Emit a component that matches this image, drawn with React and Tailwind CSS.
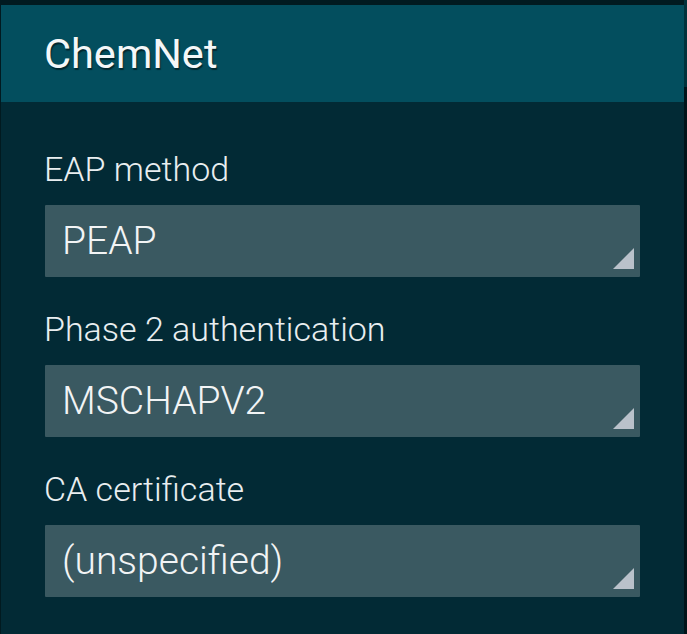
import React from "react";

function Field({ label, value }) {
  return (
    <div className="flex flex-col">
      <div className="h-[40px] leading-[40px] text-[34px] -ml-[1px] text-[#e9eef0] font-light whitespace-nowrap">
        {label}
      </div>
      <div className="relative mt-[16px] h-[72px] w-[595px] bg-[#3a5961] rounded-[1px] flex items-center pl-[17px]">
        <span className="text-[39px] leading-[72px] text-[#f2f4f5] font-light whitespace-nowrap">
          {value}
        </span>
        <svg
          className="absolute right-[6px] bottom-[8px]"
          width="21"
          height="21"
          viewBox="0 0 21 21"
        >
          <polygon points="21,0 21,21 0,21" fill="#b9c1ca" />
        </svg>
      </div>
    </div>
  );
}

export default function App() {
  return (
    <div
      className="w-[687px] h-[634px] bg-[#011a20] flex overflow-hidden"
      style={{ fontFamily: "Roboto, 'Noto Sans', sans-serif" }}
    >
      <div className="ml-[1px] mt-[5px] w-[683px] h-[629px] bg-[#022a35] flex flex-col">
        <div className="h-[97px] bg-[#034e5e] pl-[43px] flex items-center">
          <span
            className="text-[41.5px] leading-[97px] text-[#f4f7f8] whitespace-nowrap"
            style={{ textShadow: "1px 2px 1px rgba(0,0,0,0.5)" }}
          >
            ChemNet
          </span>
        </div>
        <div className="pl-[44px] pt-[47px] flex flex-col gap-[32px]">
          <Field label="EAP method" value="PEAP" />
          <Field label="Phase 2 authentication" value="MSCHAPV2" />
          <Field label="CA certificate" value="(unspecified)" />
        </div>
      </div>
      <div className="w-[3px] flex flex-col">
        <div className="h-[87px] bg-[#01323c]" />
        <div className="flex-1 bg-[#00141a]" />
      </div>
    </div>
  );
}
